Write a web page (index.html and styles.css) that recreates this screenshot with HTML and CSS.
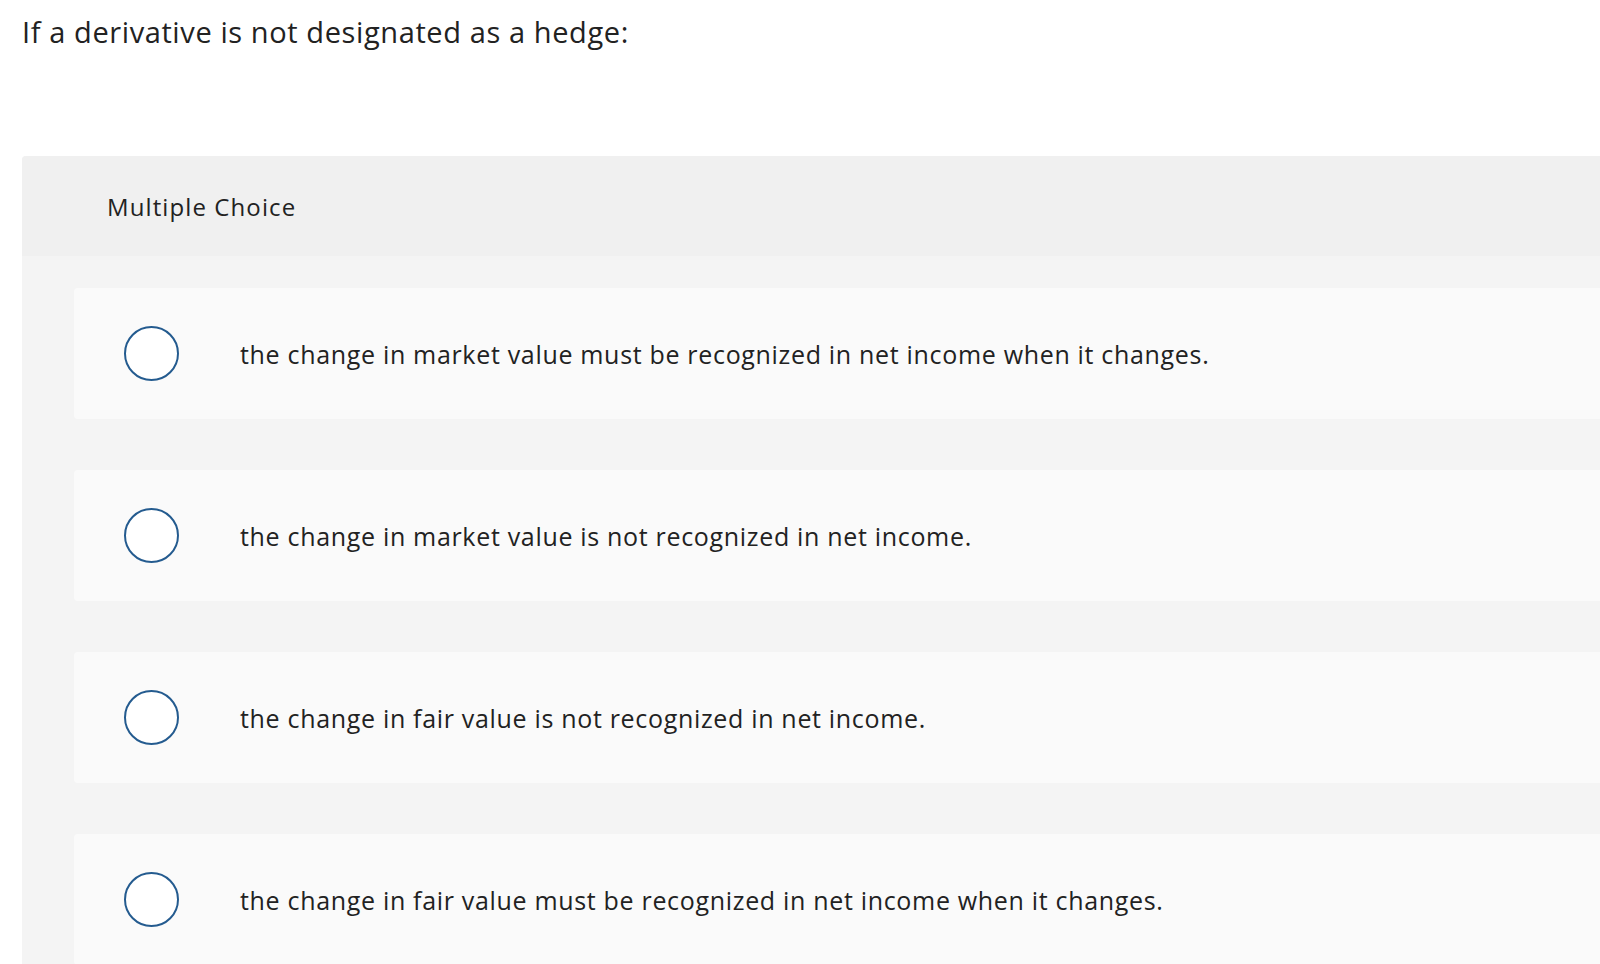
FILE: index.html
```html
<!DOCTYPE html>
<html lang="en">
<head>
<meta charset="utf-8">
<title>Multiple Choice</title>
<link rel="stylesheet" href="styles.css">
</head>
<body>
<h1 class="prompt">If a derivative is not designated as a hedge:</h1>
<section class="panel">
  <header class="panel-head">Multiple Choice</header>
  <div class="panel-body">
    <label class="option"><span class="radio"></span><span class="option-text">the change in market value must be recognized in net income when it changes.</span></label>
    <label class="option"><span class="radio"></span><span class="option-text">the change in market value is not recognized in net income.</span></label>
    <label class="option"><span class="radio"></span><span class="option-text">the change in fair value is not recognized in net income.</span></label>
    <label class="option"><span class="radio"></span><span class="option-text">the change in fair value must be recognized in net income when it changes.</span></label>
  </div>
</section>
</body>
</html>
```
FILE: styles.css
```css
html, body {
  margin: 0;
  padding: 0;
  background: #ffffff;
  overflow: hidden;
}
body {
  font-family: "Open Sans", "Noto Sans", "Liberation Sans", sans-serif;
  color: #222222;
}
.prompt {
  margin: 0;
  padding: 12px 0 0 22px;
  height: 156px;
  box-sizing: border-box;
  font-size: 29px;
  letter-spacing: 0.6px;
  font-weight: 400;
  line-height: 40px;
}
.panel {
  margin-left: 22px;
  background: #f4f4f4;
  border-top-left-radius: 4px;
}
.panel-head {
  height: 100px;
  background: #f0f0f0;
  border-top-left-radius: 4px;
  display: flex;
  align-items: center;
  padding-left: 85px;
  font-size: 24px;
  letter-spacing: 1.1px;
}
.panel-body {
  padding: 32px 0 0 52px;
  display: flex;
  flex-direction: column;
  gap: 51px;
}
.option {
  height: 131px;
  background: #fafafa;
  border-radius: 4px 0 0 4px;
  display: flex;
  align-items: center;
  padding-left: 50px;
}
.radio {
  width: 55px;
  height: 55px;
  box-sizing: border-box;
  border: 2px solid #245b8f;
  border-radius: 50%;
  background: #ffffff;
  flex: none;
}
.option-text {
  margin-left: 61px;
  font-size: 25px;
  letter-spacing: 0.68px;
}
```
